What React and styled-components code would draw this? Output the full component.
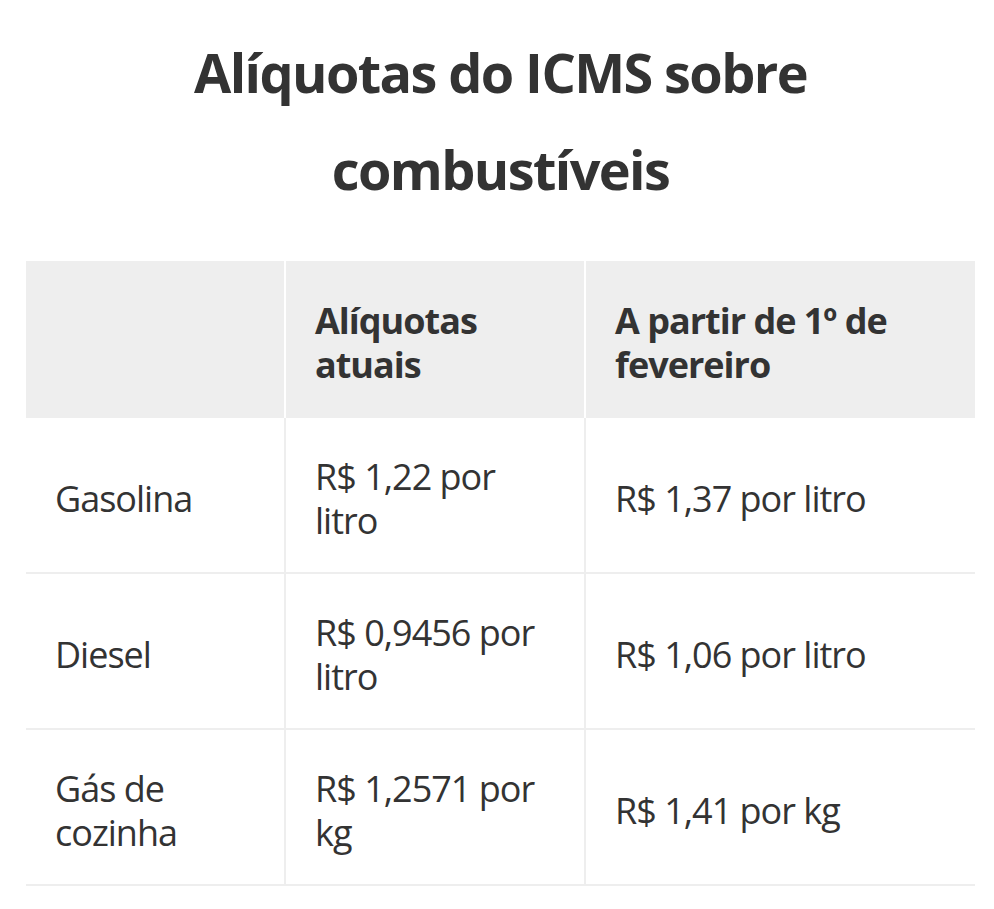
import React from 'react';
import styled, { createGlobalStyle } from 'styled-components';

const GlobalStyle = createGlobalStyle`
  html, body {
    margin: 0;
    padding: 0;
    background: #ffffff;
  }
  body {
    font-family: "Open Sans", "Liberation Sans", sans-serif;
    color: #333333;
  }
`;

const Page = styled.div`
  width: 949px;
  margin-left: 26px;
  padding-top: 24px;
`;

const Title = styled.h1`
  margin: 0 0 43px 0;
  text-align: center;
  font-size: 54px;
  line-height: 97px;
  font-weight: 700;
  letter-spacing: -1.6px;
  color: #333333;
`;

const Table = styled.table`
  width: 100%;
  border-collapse: collapse;
  table-layout: fixed;
`;

const HeadCell = styled.th`
  background: #eeeeee;
  text-align: left;
  vertical-align: middle;
  height: 150px;
  padding: 7px 29px 0 29px;
  font-size: 36px;
  line-height: 44px;
  font-weight: 700;
  letter-spacing: -1px;
  border-left: 2px solid #ffffff;
  &:first-child {
    border-left: none;
  }
`;

const Row = styled.tr`
  border-bottom: 2px solid #eeeeee;
`;

const Cell = styled.td`
  vertical-align: middle;
  height: 147px;
  padding: 7px 29px 0 29px;
  font-size: 36px;
  line-height: 44px;
  font-weight: 400;
  letter-spacing: -1px;
  border-left: 2px solid #eeeeee;
  &:first-child {
    border-left: none;
  }
`;

const rows = [
  ['Gasolina', 'R$ 1,22 por litro', 'R$ 1,37 por litro'],
  ['Diesel', 'R$ 0,9456 por litro', 'R$ 1,06 por litro'],
  ['Gás de cozinha', 'R$ 1,2571 por kg', 'R$ 1,41 por kg'],
];

export default function App() {
  return (
    <>
      <GlobalStyle />
      <Page>
        <Title>
          Alíquotas do ICMS sobre
          <br />
          combustíveis
        </Title>
        <Table>
          <colgroup>
            <col style={{ width: '259px' }} />
            <col style={{ width: '300px' }} />
            <col style={{ width: '390px' }} />
          </colgroup>
          <thead>
            <tr>
              <HeadCell></HeadCell>
              <HeadCell>Alíquotas atuais</HeadCell>
              <HeadCell>A partir de 1º de fevereiro</HeadCell>
            </tr>
          </thead>
          <tbody>
            {rows.map((r) => (
              <Row key={r[0]}>
                {r.map((c, i) => (
                  <Cell key={i}>{c}</Cell>
                ))}
              </Row>
            ))}
          </tbody>
        </Table>
      </Page>
    </>
  );
}
